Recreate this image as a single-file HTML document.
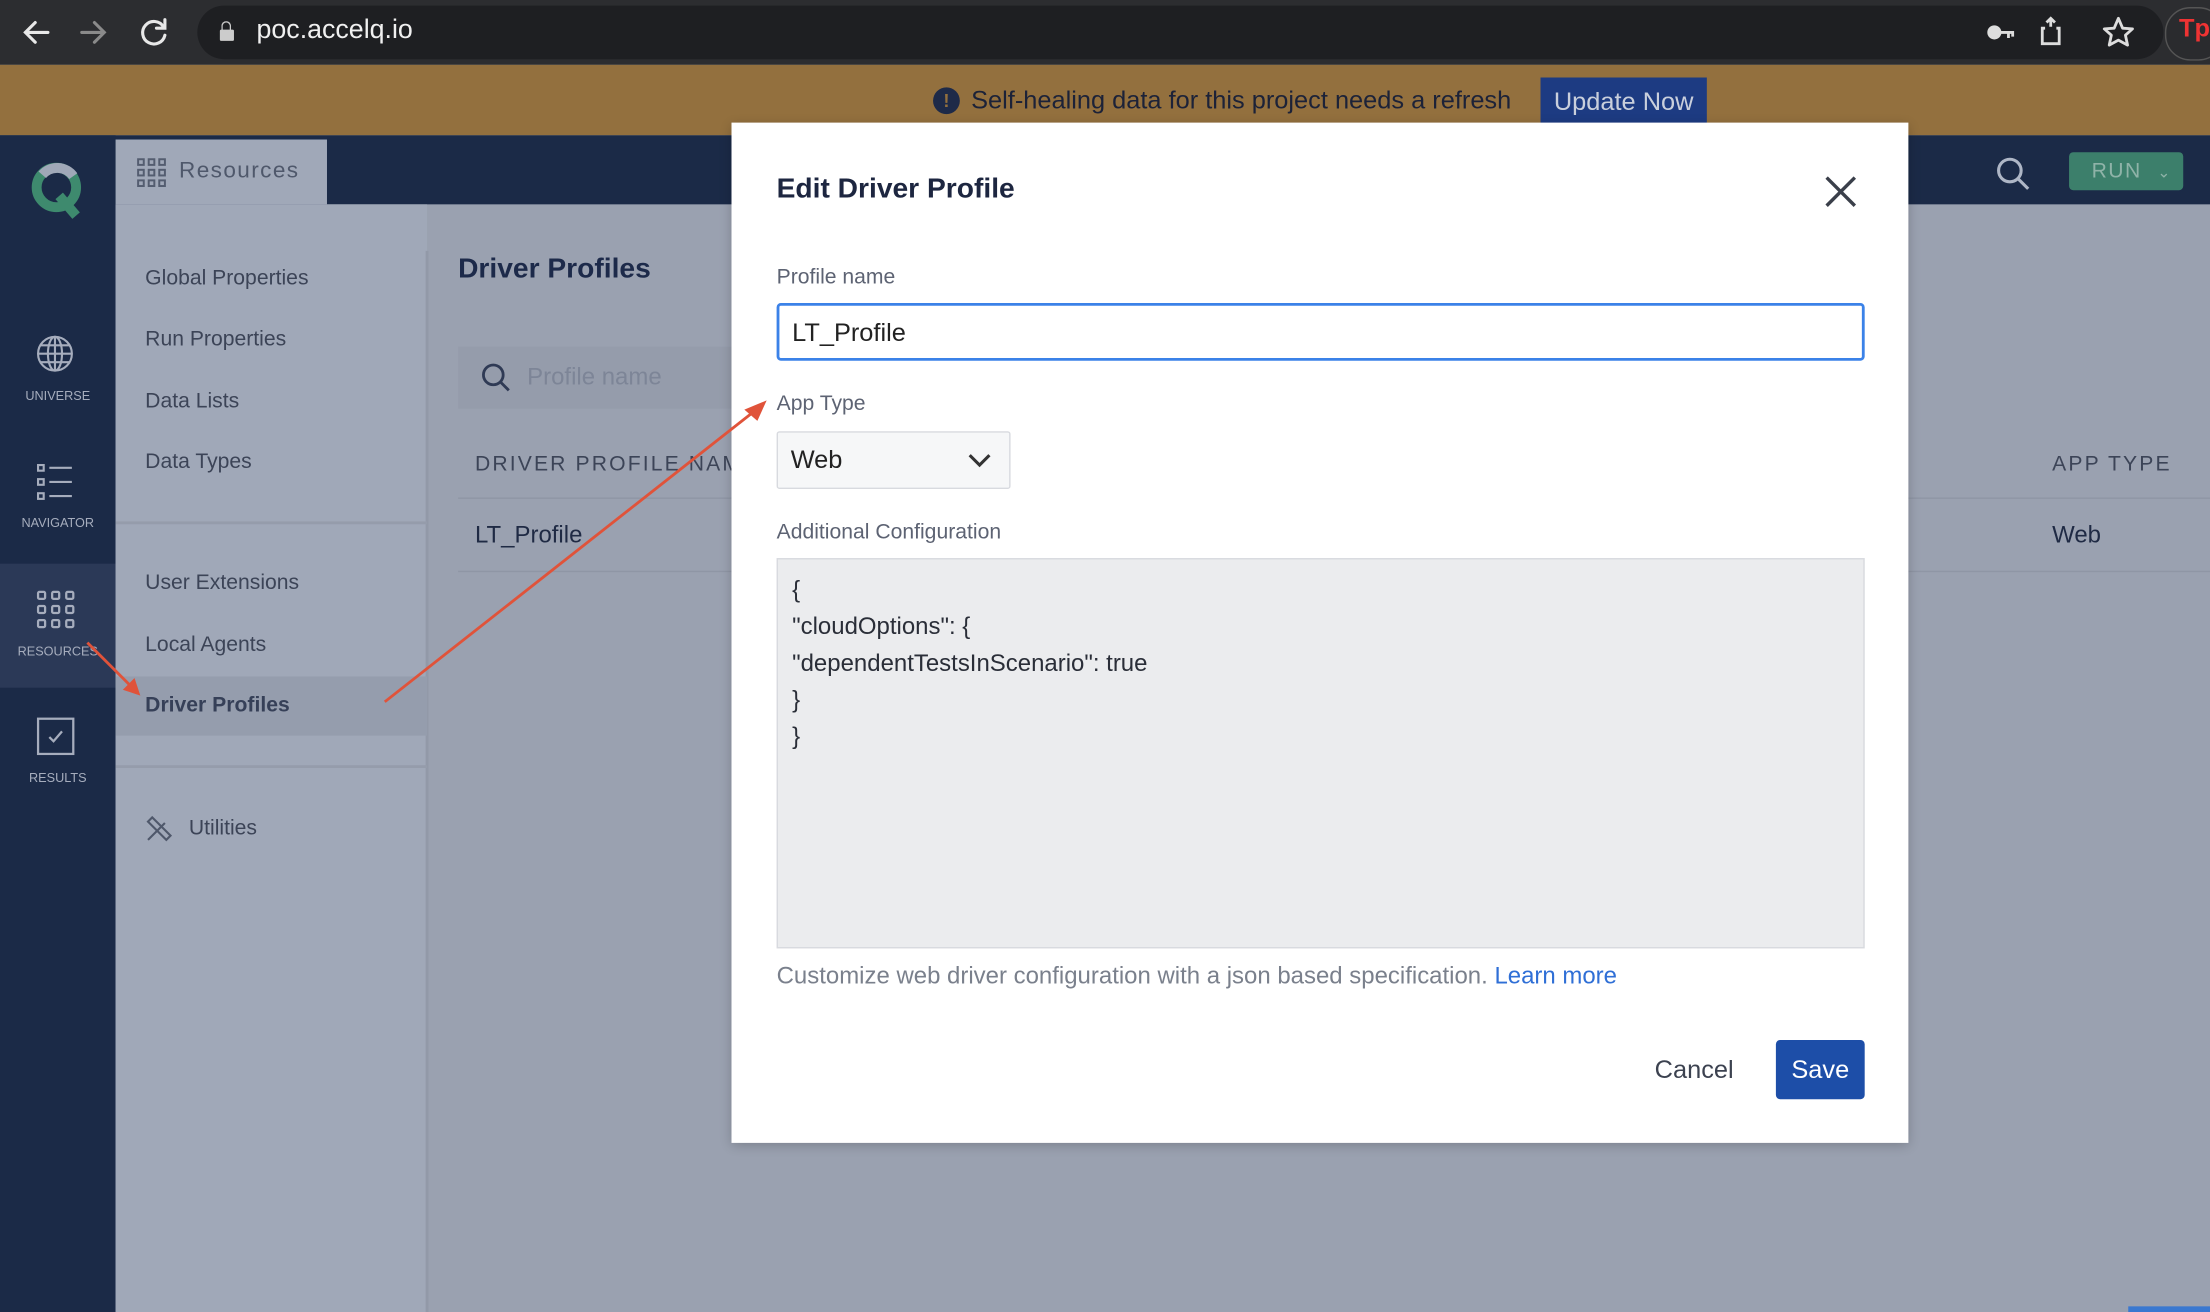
<!DOCTYPE html>
<html><head><meta charset="utf-8"><style>
html,body{margin:0;padding:0;width:2210px;height:1312px;overflow:hidden;background:#9aa1b0;}
#s{position:absolute;left:0;top:0;width:1568px;height:931px;transform:scale(1.40944,1.40924);transform-origin:0 0;font-family:"Liberation Sans",sans-serif;}
.a{position:absolute;}
.nav{position:absolute;left:103px;font-size:15px;color:#3c4457;}
.sb{position:absolute;left:0;width:82px;text-align:center;font-size:9px;color:#a6adbd;}
.lbl{position:absolute;left:551px;font-size:15px;color:#5d6373;}
</style></head><body><div id="s">
<!-- browser bar -->
<div class="a" style="left:0;top:0;width:1568px;height:46px;background:#2c2d30"></div>
<div class="a" style="left:140px;top:4px;width:1395px;height:38px;border-radius:19px;background:#1e1f22"></div>
<svg class="a" style="left:14px;top:12px" width="110" height="22" viewBox="0 0 110 22" fill="none" stroke-width="2.2" stroke-linecap="round">
<path d="M20 11H4M11 4L4 11L11 18" stroke="#e8e8e8"/>
<path d="M44 11H60M53 4L60 11L53 18" stroke="#8a8a8a"/>
<path d="M102 7A8 8 0 1 0 103 13" stroke="#e8e8e8"/><path d="M103 2V8H97" stroke="#e8e8e8"/>
</svg>
<div class="a" style="left:156px;top:15px;width:9px;height:13px;"><div style="position:absolute;left:1px;top:0;width:5px;height:6px;border:1.6px solid #ccc;border-bottom:none;border-radius:4px 4px 0 0"></div><div style="position:absolute;left:0;top:6px;width:10px;height:8px;background:#ccc;border-radius:1px"></div></div>
<div class="a" style="left:182px;top:11px;font-size:19px;color:#f0f0f0">poc.accelq.io</div>
<svg class="a" style="left:1408px;top:10px" width="110" height="26" viewBox="0 0 110 26" fill="none" stroke="#ddd" stroke-width="2">
<circle cx="7" cy="13" r="4" fill="#ddd"/><path d="M11 13H21M17 13V17M20 13V16"/>
<path d="M47 9V3M44 6L47 3L50 6M43 10H41V21H53V10H51"/>
<path d="M95 3L98 10L105 10.5L100 15L101.5 22L95 18.5L88.5 22L90 15L85 10.5L92 10Z" stroke-linejoin="round"/>
</svg>
<div class="a" style="left:1536px;top:5px;width:40px;height:36px;border-radius:18px;border:1px solid #555;background:#2a2b2e"></div>
<div class="a" style="left:1546px;top:10px;font-size:18px;font-weight:bold;color:#e33">Tp</div>
<!-- banner -->
<div class="a" style="left:0;top:46px;width:1568px;height:50px;background:#93703e"></div>
<div class="a" style="left:662px;top:62px;width:19px;height:19px;border-radius:50%;background:#1e2a48;color:#93703e;font-size:13px;font-weight:bold;text-align:center;line-height:19px">!</div>
<div class="a" style="left:689px;top:61px;font-size:18px;color:#1c2238">Self-healing data for this project needs a refresh</div>
<div class="a" style="left:1093px;top:55px;width:118px;height:34px;background:#1d3b82;color:#c9cfdc;font-size:18px;text-align:center;line-height:34px">Update Now</div>
<!-- app header -->
<div class="a" style="left:0;top:96px;width:1568px;height:49px;background:#1b2a47"></div>
<div class="a" style="left:0;top:96px;width:82px;height:835px;background:#1b2a47"></div>
<svg class="a" style="left:20px;top:113px" width="42" height="44" viewBox="0 0 42 44"><circle cx="20" cy="20" r="14" fill="none" stroke="#3e8a6e" stroke-width="7"/><path d="M10 11A14 14 0 0 1 32 12" stroke="#a0a8b8" stroke-width="7" fill="none"/><path d="M22 26L34 40" stroke="#3e8a6e" stroke-width="7"/></svg>
<div class="a" style="left:82px;top:99px;width:150px;height:46px;background:#a0a8b8"></div>
<svg class="a" style="left:97px;top:112px" width="21" height="21" viewBox="0 0 21 21" fill="none" stroke="#545d70" stroke-width="1.4"><rect x="1" y="1" width="4" height="4"/><rect x="8.5" y="1" width="4" height="4"/><rect x="16" y="1" width="4" height="4"/><rect x="1" y="8.5" width="4" height="4"/><rect x="8.5" y="8.5" width="4" height="4"/><rect x="16" y="8.5" width="4" height="4"/><rect x="1" y="16" width="4" height="4"/><rect x="8.5" y="16" width="4" height="4"/><rect x="16" y="16" width="4" height="4"/></svg>
<div class="a" style="left:127px;top:113px;font-size:16px;color:#4f586b;letter-spacing:1px">Resources</div>
<svg class="a" style="left:1415px;top:110px" width="26" height="26" viewBox="0 0 26 26" fill="none" stroke="#aeb6c6" stroke-width="2.2"><circle cx="11" cy="11" r="8"/><path d="M17 17L24 24"/></svg>
<div class="a" style="left:1468px;top:108px;width:81px;height:27px;background:#3c7f6b;border-radius:3px;color:#8fb3a8;font-size:15px;line-height:27px;padding-left:16px;box-sizing:border-box;letter-spacing:1px">RUN <span style="font-size:11px;margin-left:6px">&#8964;</span></div>
<!-- left icon sidebar -->
<svg class="a" style="left:25px;top:237px" width="28" height="28" viewBox="0 0 28 28" fill="none" stroke="#a6adbd" stroke-width="1.5"><circle cx="14" cy="14" r="12"/><ellipse cx="14" cy="14" rx="5" ry="12"/><path d="M2 14H26M4 8H24M4 20H24M14 2V26"/></svg>
<div class="sb" style="top:276px">UNIVERSE</div>
<svg class="a" style="left:25px;top:328px" width="28" height="28" viewBox="0 0 28 28" fill="none" stroke="#a6adbd" stroke-width="1.5"><rect x="2" y="2" width="4" height="4"/><rect x="2" y="12" width="4" height="4"/><rect x="2" y="22" width="4" height="4"/><path d="M10 4H26M10 14H26M10 24H26"/></svg>
<div class="sb" style="top:366px">NAVIGATOR</div>
<div class="a" style="left:0;top:400px;width:82px;height:88px;background:#2b3957"></div>
<svg class="a" style="left:26px;top:419px" width="27" height="27" viewBox="0 0 27 27" fill="none" stroke="#a6adbd" stroke-width="1.6"><rect x="1" y="1" width="5" height="5" rx="1"/><rect x="11" y="1" width="5" height="5" rx="1"/><rect x="21" y="1" width="5" height="5" rx="1"/><rect x="1" y="11" width="5" height="5" rx="1"/><rect x="11" y="11" width="5" height="5" rx="1"/><rect x="21" y="11" width="5" height="5" rx="1"/><rect x="1" y="21" width="5" height="5" rx="1"/><rect x="11" y="21" width="5" height="5" rx="1"/><rect x="21" y="21" width="5" height="5" rx="1"/></svg>
<div class="sb" style="top:457px">RESOURCES</div>
<svg class="a" style="left:26px;top:509px" width="27" height="27" viewBox="0 0 27 27" fill="none" stroke="#a6adbd" stroke-width="1.6"><rect x="1" y="1" width="25" height="25"/><path d="M9 14L12 17L18 10"/></svg>
<div class="sb" style="top:547px">RESULTS</div>
<!-- secondary nav -->
<div class="a" style="left:82px;top:145px;width:221px;height:786px;background:#a0a8b8"></div>
<div class="a" style="left:302px;top:178px;width:2px;height:753px;background:#9299a8"></div>
<div class="a" style="left:82px;top:370px;width:221px;height:2px;background:#959cab"></div>
<div class="a" style="left:82px;top:480px;width:221px;height:42px;background:#959dad"></div>
<div class="a" style="left:82px;top:543px;width:221px;height:2px;background:#959cab"></div>
<div class="nav" style="top:189px">Global Properties</div>
<div class="nav" style="top:232px">Run Properties</div>
<div class="nav" style="top:276px">Data Lists</div>
<div class="nav" style="top:319px">Data Types</div>
<div class="nav" style="top:405px">User Extensions</div>
<div class="nav" style="top:449px">Local Agents</div>
<div class="nav" style="top:492px;font-weight:bold;color:#364058">Driver Profiles</div>
<svg class="a" style="left:103px;top:578px" width="20" height="20" viewBox="0 0 20 20" fill="none" stroke="#4f586b" stroke-width="1.5"><path d="M2 18L14 6M5 2L18 15L15 18L2 5Z"/></svg>
<div class="nav" style="left:134px;top:579px">Utilities</div>
<!-- content -->
<div class="a" style="left:325px;top:180px;font-size:20px;font-weight:bold;color:#1d2a4a">Driver Profiles</div>
<div class="a" style="left:325px;top:246px;width:200px;height:44px;background:#959cab"></div>
<svg class="a" style="left:341px;top:257px" width="22" height="22" viewBox="0 0 22 22" fill="none" stroke="#2f3a55" stroke-width="2"><circle cx="9" cy="9" r="7"/><path d="M14 14L20 20"/></svg>
<div class="a" style="left:374px;top:258px;font-size:17px;color:#7d8597">Profile name</div>
<div class="a" style="left:337px;top:321px;font-size:15px;color:#3c4457;letter-spacing:1.5px">DRIVER PROFILE NAM</div>
<div class="a" style="left:1456px;top:321px;font-size:15px;color:#3c4457;letter-spacing:1.5px">APP TYPE</div>
<div class="a" style="left:325px;top:353px;width:1243px;height:1px;background:#8f96a5"></div>
<div class="a" style="left:337px;top:370px;font-size:17px;color:#1f2a44">LT_Profile</div>
<div class="a" style="left:1456px;top:370px;font-size:17px;color:#1f2a44">Web</div>
<div class="a" style="left:325px;top:405px;width:1243px;height:1px;background:#8f96a5"></div>
<div class="a" style="left:1510px;top:927px;width:58px;height:4px;background:#3a78d0"></div>
<!-- modal -->
<div class="a" style="left:519px;top:87px;width:835px;height:724px;background:#fff;box-shadow:0 2px 8px rgba(0,0,0,.2)"></div>
<div class="a" style="left:551px;top:123px;font-size:20px;font-weight:bold;color:#1d2640">Edit Driver Profile</div>
<svg class="a" style="left:1294px;top:124px" width="24" height="24" viewBox="0 0 24 24" stroke="#3a3f4a" stroke-width="2.4"><path d="M2 2L22 22M22 2L2 22"/></svg>
<div class="lbl" style="top:188px">Profile name</div>
<div class="a" style="left:551px;top:215px;width:772px;height:41px;box-sizing:border-box;border:2px solid #3b82e8;border-radius:3px;font-size:18px;color:#222;padding:9px 0 0 9px">LT_Profile</div>
<div class="lbl" style="top:278px">App Type</div>
<div class="a" style="left:551px;top:306px;width:166px;height:41px;box-sizing:border-box;border:1.5px solid #d8dadf;border-radius:2px;background:#f6f7f8;font-size:18px;color:#222;padding:9px 0 0 9px">Web</div>
<svg class="a" style="left:686px;top:321px" width="18" height="12" viewBox="0 0 18 12" fill="none" stroke="#333" stroke-width="2.2"><path d="M2 2L9 9L16 2"/></svg>
<div class="lbl" style="top:369px">Additional Configuration</div>
<div class="a" style="left:551px;top:396px;width:772px;height:277px;box-sizing:border-box;border:1.5px solid #d8dadf;background:#ebecee;font-size:17px;color:#2a2e38;padding:9px 10px;line-height:26px">{<br>"cloudOptions": {<br>"dependentTestsInScenario": true<br>}<br>}</div>
<div class="a" style="left:551px;top:683px;font-size:17px;color:#7a808c">Customize web driver configuration with a json based specification. <span style="color:#2f6fd6">Learn more</span></div>
<div class="a" style="left:1174px;top:749px;font-size:18px;color:#3c4250">Cancel</div>
<div class="a" style="left:1260px;top:738px;width:63px;height:42px;background:#1d4ea8;border-radius:3px;color:#fff;font-size:18px;text-align:center;line-height:42px">Save</div>
<!-- arrows -->
<svg class="a" style="left:0;top:0" width="1568" height="931" viewBox="0 0 1568 931" fill="none" stroke="#e0533a" stroke-width="2">
<path d="M273 498L540 288"/><path d="M530 291L542 286L537 297Z" fill="#e0533a"/>
<path d="M62 456L96 490"/><path d="M89 489L98 492L95 483Z" fill="#e0533a"/>
</svg>
</div></body></html>
